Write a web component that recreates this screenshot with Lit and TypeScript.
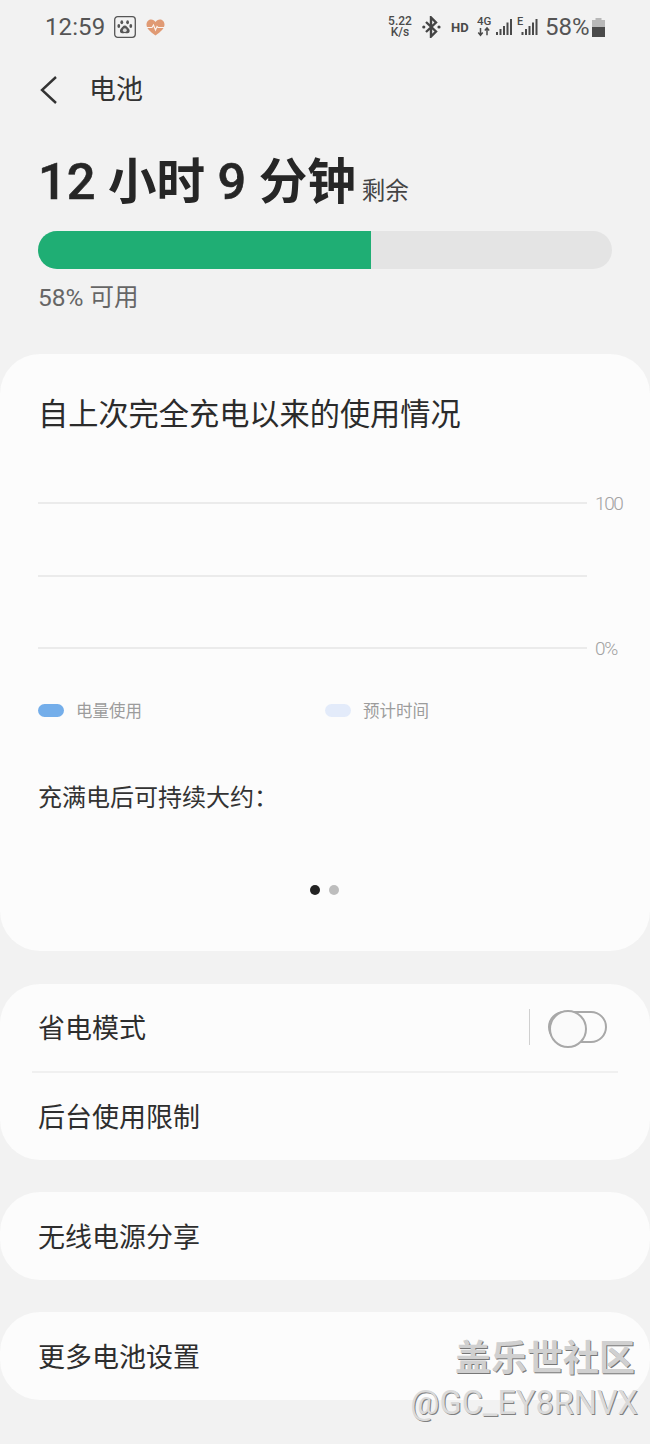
import { LitElement, html, css } from "lit";
import { customElement } from "lit/decorators.js";

@customElement("app-root")
export class AppRoot extends LitElement {
  static styles = css`
    :host { display: block; position: relative; width: 650px; height: 1444px; overflow: hidden; background: #f2f2f2; font-family: Roboto, "Noto Sans CJK SC", sans-serif; color: #262626; }
    * { box-sizing: border-box; }
    .status { height: 54px; display: flex; align-items: center; padding: 0 45px; color: #555; }
    .time { font-size: 24px; line-height: 54px; width: 69px; letter-spacing: 0.1px; }
    .paw { display: block; margin-right: 10px; }
    .spacer { flex: 1; }
    .speed { width: 26px; font-size: 12px; line-height: 11.5px; font-weight: 500; text-align: center; margin-right: 9px; color: #4a4a4a; }
    .bt { display: block; margin-right: 10px; }
    .hd { font-size: 13px; font-weight: 700; width: 17px; margin-right: 9px; color: #4a4a4a; white-space: nowrap; }
    .sig { display: block; margin-right: 4px; }
    .sig2 { display: block; margin-right: 7px; }
    .pct { font-size: 24px; width: 47px; color: #555; }
    .batt { display: block; margin-top: 1px; }
    .header { height: 72px; display: flex; align-items: center; padding-left: 38px; }
    .back { display: block; margin-right: 29px; }
    .header-title { font-size: 27px; line-height: 72px; margin-left: -1px; color: #333; }
    .summary { padding: 18px 38px 0; height: 228px; }
    .remain { display: flex; align-items: baseline; height: 70px; padding-top: 6px; line-height: 64px; }
    .big { font-size: 50.5px; font-weight: 500; letter-spacing: 0; white-space: pre; -webkit-text-stroke: 0.6px #262626; }
    .big .cjk { font-size: 48.5px; font-weight: 700; letter-spacing: 0; -webkit-text-stroke: 0; }
    .left { font-size: 23.5px; margin-left: 6px; color: #444; }
    .bar { margin-top: 17px; height: 38px; border-radius: 19px; background: #e4e4e4; overflow: hidden; }
    .fill { height: 100%; background: #1fae74; }
    .avail { margin-top: 13px; font-size: 24.5px; line-height: 32px; color: #666; }
    .card { background: #fcfcfc; border-radius: 40px; }
    .usage { height: 597px; padding: 0 38px; overflow: hidden; }
    .usage h2 { margin: 45px 0 0; font-size: 30.2px; font-weight: 400; line-height: 32px; color: #2b2b2b; }
    .chart { margin-top: 71px; display: flex; flex-direction: column; height: 147px; justify-content: space-between; width: 586px; }
    .gl { display: flex; align-items: center; height: 2px; }
    .gl i { display: block; width: 549px; height: 2px; background: #ebebeb; }
    .gl span { margin-left: 8px; font-size: 19px; font-weight: 300; letter-spacing: -1.4px; color: #a2a2a2; white-space: nowrap; }
    .legend { margin-top: 49px; display: grid; grid-template-columns: 287px auto; height: 24px; }
    .li { display: flex; align-items: center; font-size: 16.5px; color: #9c9c9c; }
    .sw { width: 26px; height: 13px; border-radius: 7px; margin-right: 12px; }
    .sw.a { background: #74aeea; }
    .sw.b { background: #e3ebfa; }
    .full { margin: 62px 0 0; font-size: 24px; line-height: 28px; color: #333; }
    .dots { margin-top: 73px; display: flex; justify-content: center; gap: 9px; padding-right: 2px; }
    .dots i { display: block; width: 10px; height: 10px; border-radius: 50%; background: #bdbdbd; }
    .dots i:first-child { background: #222; }
    .card.opts { margin-top: 33px; }
    .card.single { margin-top: 32px; }
    .row { height: 88px; display: flex; align-items: center; padding: 0 38px 1px; font-size: 27px; color: #2e2e2e; }
    .row.split { height: 87px; padding-bottom: 2px; }
    .row.r { padding-right: 43px; }
    .row .sep { width: 1px; height: 36px; background: #d0d0d0; margin-right: 18px; margin-left: auto; }
    .div { height: 2px; margin: 0 32px; background: #f0f0f0; }
    .toggle { position: relative; width: 59px; height: 32px; border: 2px solid #a8a8a8; border-radius: 16px; }
    .toggle::before { content: ""; position: absolute; left: -1px; top: -3px; width: 34px; height: 34px; border-radius: 50%; border: 2px solid #a8a8a8; background: #fafafa; }
    .wm { position: absolute; right: 12px; bottom: 22px; text-align: right; pointer-events: none; }
    .wm1 { font-size: 36px; line-height: 40px; font-weight: 700; color: #d0d0d0; text-shadow: 1px 1px 0 #777; margin-right: 3px; }
    .wm2 { font-size: 32.5px; line-height: 38px; font-weight: 400; color: #dadada; text-shadow: 1px 1px 0 #808080; margin-top: 5px; }
  `;

  render() {
    return html`
      <div class="status">
        <span class="time">12:59</span>
        <svg class="paw" width="22" height="22" viewBox="0 0 22 22">
          <rect x="0.7" y="0.7" width="20.6" height="20.6" rx="3" fill="none" stroke="#555" stroke-width="1.3"/>
          <g fill="#555">
            <ellipse cx="7.8" cy="6.2" rx="1.4" ry="2"/>
            <ellipse cx="13.6" cy="6.2" rx="1.4" ry="2"/>
            <ellipse cx="4.8" cy="10" rx="1.4" ry="1.9"/>
            <ellipse cx="16.8" cy="10" rx="1.4" ry="1.9"/>
            <path d="M10.8 9.5c-2 0-2.6 2-3.8 3-1.4 1.2-1.6 4.6 1.2 4.8 1 0 1.7-.4 2.6-.4s1.7.4 2.7.4c2.8-.2 2.6-3.6 1.1-4.8-1.2-1-1.8-3-3.8-3z"/>
          </g>
          <circle cx="10.8" cy="14.2" r="1.9" fill="#ddd"/>
        </svg>
        <svg width="19" height="17" viewBox="0 0 19 17">
          <path d="M9.5 16.5C4 12.5.5 9.5.5 5.5.5 2.5 2.7.5 5.2.5c1.8 0 3.3 1 4.3 2.5C10.5 1.5 12 .5 13.8.5c2.5 0 4.7 2 4.7 5 0 4-3.5 7-9 11z" fill="#e09a74"/>
          <path d="M1 8.500h5l1.500-2.500 2 5 1.500-3.500 1 1h6" fill="none" stroke="#fbf3ee" stroke-width="1.1"/>
        </svg>
        <span class="spacer"></span>
        <span class="speed">5.22<br/>K/s</span>
        <svg class="bt" width="19" height="22" viewBox="0 0 19 22">
          <path d="M4 6l10 9.500-5 5V1.500l5 5L4 16" fill="none" stroke="#444" stroke-width="2.4"/>
          <circle cx="1.800" cy="11" r="1.600" fill="#444"/><circle cx="17" cy="11" r="1.600" fill="#444"/>
        </svg>
        <span class="hd">HD</span>
        <svg class="sig" width="36" height="32" viewBox="0 -6 36 32">
          <text x="0" y="8" font-size="11.5" font-weight="500" fill="#4a4a4a" font-family="Roboto, sans-serif">4G</text>
          <path d="M3.500 11v7M1.300 15.500 3.500 18.200l2.200-2.700M10 18.200v-7M7.800 13.500 10 11l2.200 2.500" fill="none" stroke="#4a4a4a" stroke-width="1.5"/>
          <g fill="#4a4a4a">
            <rect x="19" y="15" width="2" height="3"/><rect x="22.500" y="12" width="2" height="6"/><rect x="26" y="9" width="2" height="9"/><rect x="29.500" y="5.500" width="2" height="12.500"/><rect x="33" y="2" width="2" height="16"/>
          </g>
        </svg>
        <svg class="sig2" width="21" height="32" viewBox="0 -6 21 32">
          <text x="0" y="8" font-size="11" font-weight="500" fill="#4a4a4a" font-family="Roboto, sans-serif">E</text>
          <g fill="#4a4a4a">
            <rect x="4.500" y="15" width="2" height="3"/><rect x="8" y="12" width="2" height="6"/><rect x="11.500" y="9" width="2" height="9"/><rect x="15" y="5.500" width="2" height="12.500"/><rect x="18.500" y="2" width="2" height="16"/>
          </g>
        </svg>
        <span class="pct">58%</span>
        <svg class="batt" width="13" height="19" viewBox="0 0 13 19">
          <path d="M3.500 0h6v2h3.500v7H0V2h3.500z" fill="#b8b8b8"/>
          <rect y="9" width="13" height="10" fill="#4a4a4a"/>
        </svg>
      </div>

      <div class="header">
        <svg class="back" width="23" height="30" viewBox="0 0 23 30">
          <path d="M18 2 4 15l14 13" fill="none" stroke="#333" stroke-width="2.4"/>
        </svg>
        <span class="header-title">电池</span>
      </div>

      <div class="summary">
        <div class="remain">
          <span class="big">12 <span class="cjk">小时</span> 9 <span class="cjk">分钟</span></span>
          <span class="left">剩余</span>
        </div>
        <div class="bar"><div class="fill" style="width:58%"></div></div>
        <div class="avail">58% 可用</div>
      </div>

      <div class="card usage">
        <h2>自上次完全充电以来的使用情况</h2>
        <div class="chart">
          <div class="gl"><i></i><span>100</span></div>
          <div class="gl"><i></i></div>
          <div class="gl"><i></i><span>0%</span></div>
        </div>
        <div class="legend">
          <div class="li"><span class="sw a"></span>电量使用</div>
          <div class="li"><span class="sw b"></span>预计时间</div>
        </div>
        <div class="full">充满电后可持续大约：</div>
        <div class="dots"><i></i><i></i></div>
      </div>

      <div class="card opts">
        <div class="row split r">省电模式<span class="sep"></span><span class="toggle"></span></div>
        <div class="div"></div>
        <div class="row split">后台使用限制</div>
      </div>
      <div class="card single"><div class="row">无线电源分享</div></div>
      <div class="card single"><div class="row">更多电池设置</div></div>

      <div class="wm">
        <div class="wm1">盖乐世社区</div>
        <div class="wm2">@GC_EY8RNVX</div>
      </div>
    `;
  }
}
